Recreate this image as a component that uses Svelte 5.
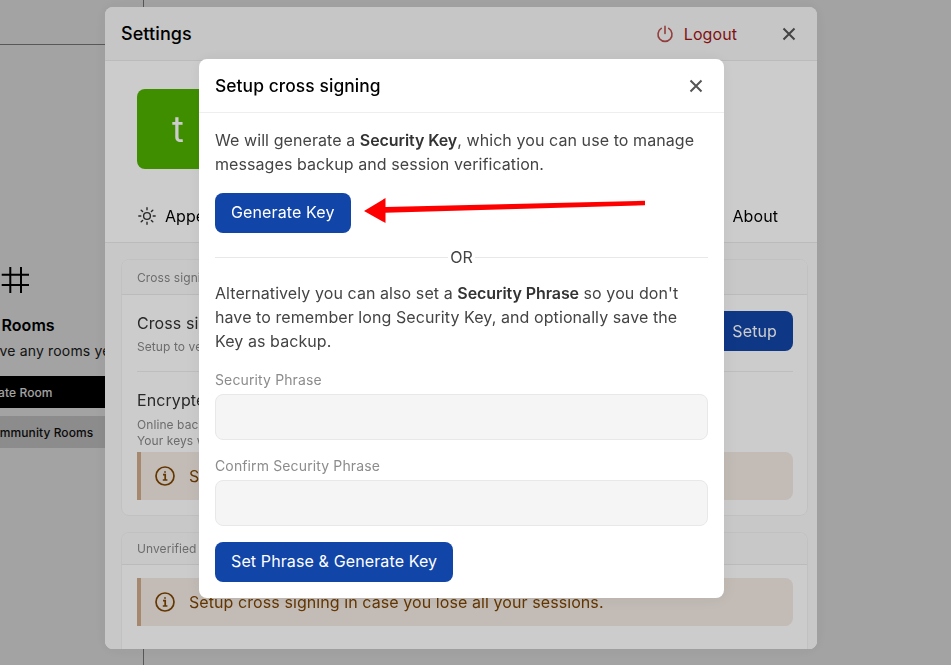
<script>
    let phrase = '';
    let confirmPhrase = '';
</script>

<div class="page">
    <aside class="sidebar">
        <div class="sidebarTop"></div>
        <div class="empty">
            <svg class="hash" width="30" height="30" viewBox="0 0 30 30" fill="none" stroke="#000" stroke-width="2">
                <path d="M10.300 2v26M21 2v26M1.700 9.700h27.300M1.700 20h27.300" />
            </svg>
            <h3>No Rooms</h3>
            <p>You don't have any rooms yet</p>
            <button class="create">Create Room</button>
            <button class="explore">Explore Community Rooms</button>
        </div>
    </aside>
</div>

<div class="overlay">
    <div class="settings">
        <header class="settingsHead">
            <h2>Settings</h2>
            <button class="logout">
                <svg width="20" height="20" viewBox="0 0 20 20" fill="none" stroke="currentColor" stroke-width="1.6" stroke-linecap="round">
                    <path d="M6.300 4.400a7 7 0 1 0 7.400 0M10 2.400v7" />
                </svg>
                Logout
            </button>
            <button class="close" aria-label="Close">
                <svg width="20" height="20" viewBox="0 0 20 20" stroke="currentColor" stroke-width="2"><path d="M4.500 4.500l11 11M15.500 4.500l-11 11" /></svg>
            </button>
        </header>
        <div class="settingsBody">
            <div class="profile">
                <div class="avatar">t</div>
            </div>
            <nav class="tabs">
                <span class="tab">
                    <svg width="20" height="20" viewBox="0 0 20 20" fill="none" stroke="#333" stroke-width="1.4" stroke-linecap="round">
                        <circle cx="10" cy="10" r="3.400" />
                        <path d="M10 1.800v2M10 16.200v2M1.800 10h2M16.200 10h2M4.200 4.200l1.400 1.400M14.400 14.400l1.400 1.400M4.200 15.800l1.400-1.400M14.400 5.600l1.400-1.400" />
                    </svg>
                    Appearance
                </span>
                <span class="tab about">About</span>
            </nav>
            <div class="sections">
                <section class="card">
                    <div class="cardHead">Cross signing and backup</div>
                    <div class="cardBody">
                        <div class="row">
                            <div>
                                <h4>Cross signing</h4>
                                <small>Setup to verify and backup your sessions.</small>
                            </div>
                            <button class="primary">Setup</button>
                        </div>
                        <hr />
                        <h4>Encrypted messages backup</h4>
                        <small class="desc">Online backup of your encrypted messages, so you can read them from your other sessions.<br />Your keys will be stored on the server.</small>
                        <div class="warn">
                            <svg width="20" height="20" viewBox="0 0 20 20" fill="none" stroke="currentColor" stroke-width="1.7"><circle cx="10" cy="10" r="9" /><path d="M8 8.600h2.200v5.200M7.800 14h4.600M10 5.200v1.600" /></svg>
                            Setup cross signing in case you lose all your sessions.
                        </div>
                    </div>
                </section>
                <section class="card">
                    <div class="cardHead short">Unverified sessions</div>
                    <div class="cardBody second">
                        <div class="warn">
                            <svg width="20" height="20" viewBox="0 0 20 20" fill="none" stroke="currentColor" stroke-width="1.7"><circle cx="10" cy="10" r="9" /><path d="M8 8.600h2.200v5.200M7.800 14h4.600M10 5.200v1.600" /></svg>
                            Setup cross signing in case you lose all your sessions.
                        </div>
                    </div>
                </section>
            </div>
        </div>
    </div>
</div>

<div class="overlay top">
    <div class="dialog">
        <header class="dialogHead">
            <h2>Setup cross signing</h2>
            <button class="close" aria-label="Close">
                <svg width="20" height="20" viewBox="0 0 20 20" stroke="currentColor" stroke-width="2"><path d="M4.500 4.500l11 11M15.500 4.500l-11 11" /></svg>
            </button>
        </header>
        <div class="dialogBody">
            <p>We will generate a <b>Security Key</b>, which you can use to manage messages backup and session verification.</p>
            <button class="primary first">Generate Key</button>
            <div class="or"><span>OR</span></div>
            <p>Alternatively you can also set a <b>Security Phrase</b> so you don't have to remember long Security Key, and optionally save the Key as backup.</p>
            <label for="phrase">Security Phrase</label>
            <input id="phrase" type="password" bind:value={phrase} />
            <label for="confirmPhrase">Confirm Security Phrase</label>
            <input id="confirmPhrase" type="password" bind:value={confirmPhrase} />
            <button class="primary last">Set Phrase &amp; Generate Key</button>
        </div>
    </div>
</div>

<svg class="arrow" width="951" height="665" viewBox="0 0 951 665">
    <path d="M364 211L385.500 198L385.500 207L645 200.800L645 205.200L385.500 212.700L385.500 223Z" fill="#f00" />
</svg>

<style>
    :global(body) {
        font-family: Inter, "Liberation Sans", sans-serif;
        letter-spacing: 0.08px;
        background: #fff;
        overflow: hidden;
    }

    * {
        box-sizing: border-box;
    }

    h2, h3, h4, p {
        margin: 0;
        font-weight: 400;
    }

    button {
        font-family: inherit;
        letter-spacing: inherit;
        border: none;
        background: none;
        padding: 0;
    }

    .page {
        height: 665px;
        display: flex;
    }

    .sidebar {
        width: 144px;
        border-right: 1px solid #8a8a8a;
        overflow: hidden;
    }

    .sidebarTop {
        height: 45px;
        border-bottom: 1px solid #8a8a8a;
    }

    .empty {
        width: 30px;
        margin-top: 220px;
        display: flex;
        flex-direction: column;
        align-items: center;
        white-space: nowrap;
    }

    .hash {
        flex: none;
    }

    .empty h3 {
        margin-top: 18px;
        font-size: 16px;
        line-height: 24px;
        font-weight: 600;
        color: #000;
    }

    .empty p {
        margin-top: 4px;
        font-size: 14px;
        line-height: 20px;
        letter-spacing: 0.16px;
        color: #222;
    }

    .empty button {
        flex: none;
        width: 240px;
        height: 32px;
        font-size: 12px;
        font-weight: 500;
    }

    .create {
        margin-top: 15px;
        background: #000;
        color: #fff;
    }

    .explore {
        margin-top: 8px;
        background: #dcdcdc;
        color: #111;
    }

    .overlay {
        position: fixed;
        inset: 0;
        background: rgba(0, 0, 0, 0.2);
        padding: 7px 0 0 105px;
    }

    .overlay.top {
        padding: 59px 0 0 199px;
    }

    .settings {
        width: 712px;
        height: 642px;
        background: #fff;
        border-radius: 8px;
        overflow: hidden;
        box-shadow: 0 0 16px rgba(0, 0, 0, 0.06);
    }

    .settingsHead {
        height: 54px;
        display: flex;
        align-items: center;
        padding: 0 18px 0 16px;
        background: #f8f8f8;
        border-bottom: 1px solid #eaeaea;
    }

    .settingsHead h2, .dialogHead h2 {
        font-size: 18px;
        font-weight: 500;
        color: #000;
        flex: 1;
    }

    .dialogHead h2 {
        font-size: 17.400px;
    }

    .logout {
        display: flex;
        align-items: center;
        gap: 9px;
        font-size: 16px;
        color: #a31515;
        margin-right: 42px;
    }

    .logout svg {
        opacity: 0.75;
    }

    .close {
        display: flex;
        color: #555;
    }

    .settingsBody {
        background: #fff;
    }

    .profile {
        padding: 28px 32px 0;
    }

    .avatar {
        width: 80px;
        height: 80px;
        padding-left: 2px;
        border-radius: 8px;
        background: #4fb200;
        color: #fff;
        font-size: 36px;
        display: flex;
        align-items: center;
        justify-content: center;
    }

    .tabs {
        height: 74px;
        padding: 27px 32px 0;
        display: flex;
        justify-content: space-between;
        border-bottom: 1px solid #eaeaea;
        font-size: 16px;
        color: #000;
    }

    .tab {
        height: 40px;
        display: flex;
        align-items: center;
        gap: 8px;
    }

    .about {
        margin-right: 7px;
    }

    .sections {
        padding: 16px 9px 0 16px;
        display: flex;
        flex-direction: column;
        gap: 16px;
        background: #fafafa;
        height: 410px;
    }

    .card {
        background: #fff;
        border: 1px solid #f2f2f2;
        border-radius: 8px;
        flex: none;
    }

    .card + .card {
        flex: 1;
        border-bottom: none;
        border-radius: 8px 8px 0 0;
    }

    .cardHead {
        height: 35px;
        padding: 0 15px;
        display: flex;
        align-items: center;
        font-size: 12px;
        color: #888;
        background: #fbfbfb;
        border-bottom: 1px solid #eaeaea;
        border-radius: 8px 8px 0 0;
    }

    .cardHead.short {
        height: 32px;
    }

    .cardBody {
        padding: 16px 14px 15px 15px;
    }

    .cardBody.second {
        padding-top: 13px;
    }

    .row {
        display: flex;
        justify-content: space-between;
        align-items: flex-start;
    }

    h4 {
        font-size: 16px;
        line-height: 24px;
        color: #333;
    }

    small {
        display: block;
        font-size: 12px;
        line-height: 16px;
        color: #888;
    }

    .row small {
        margin-top: 4px;
    }

    hr {
        margin: 16px 0;
        border: none;
        border-top: 1px solid #eee;
    }

    .desc {
        margin: 5px 0 3px;
    }

    .warn {
        height: 48px;
        display: flex;
        align-items: center;
        gap: 14px;
        padding-left: 14px;
        font-size: 16px;
        color: #7d4500;
        background: #f3eae4;
        border-left: 4px solid #d0ab8a;
        border-radius: 0 8px 8px 0;
    }

    .primary {
        height: 40px;
        padding: 0 16px;
        border-radius: 8px;
        background: #1245a8;
        color: #fff;
        font-size: 16px;
        letter-spacing: 0.12px;
    }

    .dialog {
        width: 525px;
        height: 539px;
        background: #fff;
        border-radius: 8px;
        overflow: hidden;
        box-shadow: 0 0 16px rgba(0, 0, 0, 0.06);
    }

    .dialogHead {
        height: 54px;
        display: flex;
        align-items: center;
        padding: 0 18px 0 16px;
        border-bottom: 1px solid #eee;
    }

    .dialogBody {
        padding: 15px 16px 0;
        display: flex;
        flex-direction: column;
        align-items: flex-start;
        color: #444;
        font-size: 16px;
    }

    .dialogBody p {
        line-height: 24px;
    }

    .dialogBody b {
        font-weight: 600;
        letter-spacing: -0.08px;
        color: #333;
    }

    .first {
        margin-top: 17px;
        padding-bottom: 2px;
    }

    .or {
        align-self: stretch;
        margin: 14px 0 14px;
        height: 20px;
        display: flex;
        align-items: center;
        justify-content: center;
        background: linear-gradient(#e8e8e8, #e8e8e8) center / 100% 1px no-repeat;
    }

    .or span {
        background: #fff;
        padding: 0 2px;
        line-height: 20px;
    }

    label {
        margin-top: 17px;
        font-size: 14px;
        line-height: 20px;
        letter-spacing: 0.13px;
        color: #8c8c8c;
    }

    input {
        align-self: stretch;
        margin-top: 4px;
        height: 46px;
        background: #f5f5f5;
        border: 1px solid #e8e8e8;
        border-radius: 8px;
    }

    input + label {
        margin-top: 16px;
    }

    .last {
        margin-top: 16px;
        padding-bottom: 2px;
    }

    .arrow {
        position: fixed;
        left: 0;
        top: 0;
        pointer-events: none;
    }
</style>
